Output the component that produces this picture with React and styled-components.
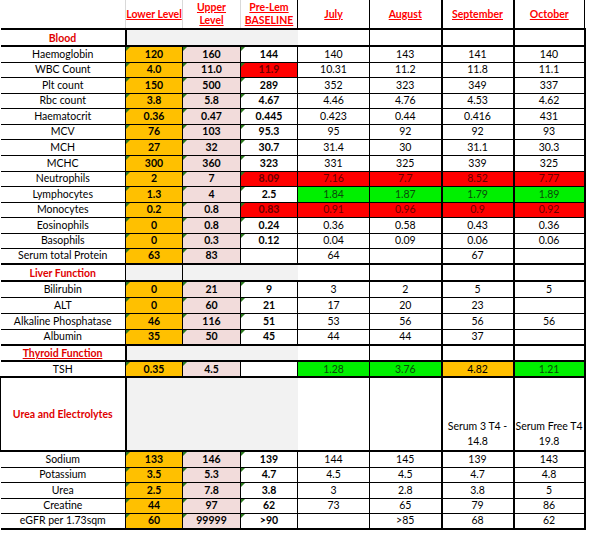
import React from "react";
import styled, { createGlobalStyle, css } from "styled-components";

const GlobalStyle = createGlobalStyle`
  body {
    margin: 0;
    background: #fff;
    font-family: Lato, "Liberation Sans", sans-serif;
  }
`;

const FILLS = {
  orange: "#ffc000",
  pink: "#f2dcdb",
  white: "#fff",
  red: "#ff0000",
  green: "#00f000",
};

const INK = {
  red: "#6a0000",
  green: "#0b4a0b",
};

const blood = [
  ["Haemoglobin", "120", "160", "144", ["140", "143", "141", "140"]],
  ["WBC Count", "4.0", "11.0", "11.9", ["10.31", "11.2", "11.8", "11.1"], "red"],
  ["Plt count", "150", "500", "289", ["352", "323", "349", "337"]],
  ["Rbc count", "3.8", "5.8", "4.67", ["4.46", "4.76", "4.53", "4.62"]],
  ["Haematocrit", "0.36", "0.47", "0.445", ["0.423", "0.44", "0.416", "431"]],
  ["MCV", "76", "103", "95.3", ["95", "92", "92", "93"]],
  ["MCH", "27", "32", "30.7", ["31.4", "30", "31.1", "30.3"]],
  ["MCHC", "300", "360", "323", ["331", "325", "339", "325"]],
  ["Neutrophils", "2", "7", "8.09", ["7.16", "7.7", "8.52", "7.77"], "red", "red"],
  ["Lymphocytes", "1.3", "4", "2.5", ["1.84", "1.87", "1.79", "1.89"], null, "green"],
  ["Monocytes", "0.2", "0.8", "0.83", ["0.91", "0.96", "0.9", "0.92"], "red", "red"],
  ["Eosinophils", "0", "0.8", "0.24", ["0.36", "0.58", "0.43", "0.36"]],
  ["Basophils", "0", "0.3", "0.12", ["0.04", "0.09", "0.06", "0.06"]],
  ["Serum total Protein", "63", "83", "", ["64", "", "67", ""]],
];

const liver = [
  ["Bilirubin", "0", "21", "9", ["3", "2", "5", "5"]],
  ["ALT", "0", "60", "21", ["17", "20", "23", ""]],
  ["Alkaline Phosphatase", "46", "116", "51", ["53", "56", "56", "56"]],
  ["Albumin", "35", "50", "45", ["44", "44", "37", ""]],
];

const electrolytes = [
  ["Sodium", "133", "146", "139", ["144", "145", "139", "143"]],
  ["Potassium", "3.5", "5.3", "4.7", ["4.5", "4.5", "4.7", "4.8"]],
  ["Urea", "2.5", "7.8", "3.8", ["3", "2.8", "3.8", "5"]],
  ["Creatine", "44", "97", "62", ["73", "65", "79", "86"]],
  ["eGFR per 1.73sqm", "60", "99999", ">90", ["", ">85", "68", "62"]],
];

const months = ["July", "August", "September", "October"];

const Sheet = styled.table`
  border-collapse: collapse;
  table-layout: fixed;
  width: 584px;
  font-size: 10.5px;
  color: #000;
`;

const HeaderRow = styled.tr`
  height: 29px;
  border-bottom: 2px solid #000;
`;

const HeaderCell = styled.th`
  padding: 0;
  color: #ff0000;
  font-weight: 700;
  line-height: 13px;
  text-align: center;
  vertical-align: middle;
  white-space: nowrap;
  border-right: 1px solid ${({ $grid }) => ($grid ? "#d9d9d9" : "#000")};
  border-left: ${({ $thick }) => ($thick ? "2px solid #000" : "none")};

  span {
    text-decoration: underline;
  }
`;

const SectionRow = styled.tr`
  height: ${({ $tall }) => $tall || 17}px;
  border-bottom: 2px solid #000;
  border-top: ${({ $top }) => ($top ? "2px solid #000" : "1px solid #000")};
`;

const SectionLabel = styled.td`
  padding: 0;
  color: #e00000;
  font-weight: 700;
  text-align: center;
  vertical-align: middle;
  white-space: nowrap;
  border-right: ${({ $thick }) => ($thick ? "2px" : "1px")} solid #000;
  border-left: ${({ $boxed }) => ($boxed ? "1px solid #000" : "none")};
  text-decoration: ${({ $underline }) => ($underline ? "underline" : "none")};
`;

const SectionFill = styled.td`
  padding: 0;
  background: #f2f2f2;
  border-right: 1px solid ${({ $line }) => ($line ? "#000" : "#f2f2f2")};
`;

const monthBorders = css`
  border-left: ${({ $col }) => ($col >= 2 ? "2px" : "1px")} solid #000;
  border-right: ${({ $col }) => ($col === 3 ? "2px" : "1px")} solid #000;
`;

const SectionMonth = styled.td`
  padding: 0 0 1px;
  text-align: center;
  vertical-align: bottom;
  line-height: 15px;
  white-space: nowrap;
  ${monthBorders}
`;

const DataRow = styled.tr`
  height: ${({ $h }) => $h}px;
  border-bottom: ${({ $edge }) => ($edge ? "2px" : "1px")} solid #000;
`;

const LabelCell = styled.td`
  padding: 0;
  text-align: center;
  vertical-align: middle;
  line-height: 13px;
  border-right: 1px solid #000;
  white-space: nowrap;
`;

const RangeCell = styled.td`
  position: relative;
  padding: 0;
  text-align: center;
  vertical-align: middle;
  line-height: 13px;
  font-weight: 700;
  background: ${({ $fill }) => FILLS[$fill] || "#fff"};
  color: ${({ $fill }) => INK[$fill] || "#000"};
  border-right: 1px solid #000;

  &::before {
    content: "";
    display: ${({ $flag }) => ($flag ? "block" : "none")};
    position: absolute;
    top: 0;
    left: 0;
    border-style: solid;
    border-width: 4px 4px 0 0;
    border-color: #2c7a1f transparent transparent transparent;
  }
`;

const MonthCell = styled.td`
  padding: 0;
  text-align: center;
  vertical-align: middle;
  line-height: 13px;
  background: ${({ $fill }) => FILLS[$fill] || "#fff"};
  color: ${({ $fill }) => INK[$fill] || "#000"};
  ${monthBorders}
`;

const heights = (n, total) => {
  const out = [];
  let prev = 0;
  for (let i = 1; i <= n; i++) {
    const next = Math.round((total * i) / n);
    out.push(next - prev);
    prev = next;
  }
  return out;
};

const Rows = ({ rows, total, tones }) => {
  const hs = heights(rows.length, total);
  return rows.map(([label, lo, hi, base, vals, baseTone, monthTone], i) => (
    <DataRow key={label} $h={hs[i]} $edge={i === rows.length - 1}>
      <LabelCell>{label}</LabelCell>
      <RangeCell $fill="orange" $flag>{lo}</RangeCell>
      <RangeCell $fill="pink" $flag>{hi}</RangeCell>
      <RangeCell $fill={baseTone} $flag={base !== ""}>{base}</RangeCell>
      {vals.map((v, c) => (
        <MonthCell key={c} $col={c} $fill={tones ? tones[c] : monthTone}>
          {v}
        </MonthCell>
      ))}
    </DataRow>
  ));
};

const BlankMonths = () =>
  months.map((m, c) => <SectionMonth key={m} $col={c} />);

export default function App() {
  return (
    <>
      <GlobalStyle />
      <Sheet>
        <colgroup>
          <col style={{ width: 125 }} />
          <col style={{ width: 57 }} />
          <col style={{ width: 58 }} />
          <col style={{ width: 57 }} />
          <col style={{ width: 72 }} />
          <col style={{ width: 72 }} />
          <col style={{ width: 72 }} />
          <col style={{ width: 71 }} />
        </colgroup>
        <tbody>
          <HeaderRow>
            <HeaderCell $grid />
            <HeaderCell $grid>
              <span>Lower Level</span>
            </HeaderCell>
            <HeaderCell $grid>
              <span>Upper </span>
              <br />
              <span>Level</span>
            </HeaderCell>
            <HeaderCell>
              <span>Pre-Lem</span>
              <br />
              <span>BASELINE</span>
            </HeaderCell>
            {months.map((m, c) => (
              <HeaderCell key={m} $thick={c >= 2}>
                <span>{m}</span>
              </HeaderCell>
            ))}
          </HeaderRow>

          <SectionRow $top>
            <SectionLabel $thick>Blood</SectionLabel>
            <SectionFill colSpan={3} />
            <BlankMonths />
          </SectionRow>
          <Rows rows={blood} total={218} />

          <SectionRow $top>
            <SectionLabel>Liver Function</SectionLabel>
            <SectionFill $line />
            <SectionFill colSpan={2} />
            <BlankMonths />
          </SectionRow>
          <Rows rows={liver} total={64} />

          <SectionRow $tall={16}>
            <SectionLabel $thick $underline>
              Thyroid Function
            </SectionLabel>
            <SectionFill colSpan={3} />
            <BlankMonths />
          </SectionRow>
          <Rows
            rows={[["TSH", "0.35", "4.5", "", ["1.28", "3.76", "4.82", "1.21"]]]}
            total={16}
            tones={["green", "green", "orange", "green"]}
          />

          <SectionRow $tall={74}>
            <SectionLabel $thick $boxed>
              Urea and Electrolytes
            </SectionLabel>
            <SectionFill colSpan={3} />
            <SectionMonth $col={0} />
            <SectionMonth $col={1} />
            <SectionMonth $col={2}>
              Serum 3 T4 -<br />
              14.8
            </SectionMonth>
            <SectionMonth $col={3}>
              Serum Free T4
              <br />
              19.8
            </SectionMonth>
          </SectionRow>
          <Rows rows={electrolytes} total={78} />
        </tbody>
      </Sheet>
    </>
  );
}
